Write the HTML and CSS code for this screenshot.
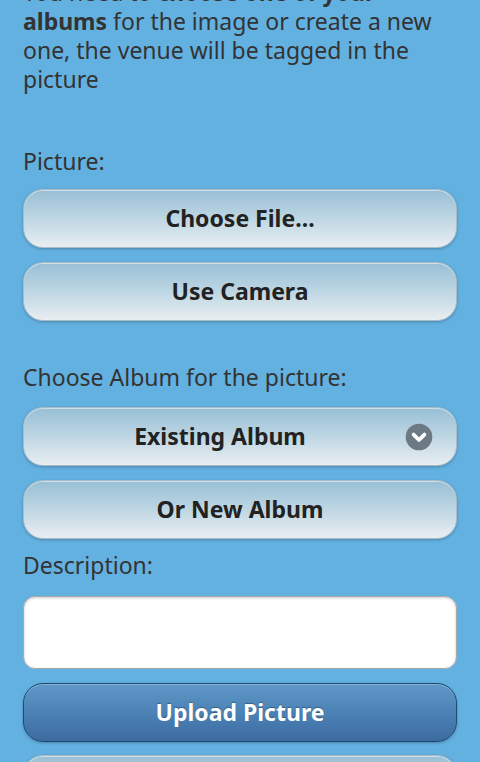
FILE: index.html
```html
<!DOCTYPE html>
<html>
<head>
<meta charset="utf-8">
<link rel="stylesheet" href="styles.css">
</head>
<body>
<div class="page">
  <p class="intro">You need to <b>choose one of your albums</b> for the image or create a new one, the venue will be tagged in the picture</p>

  <div class="label label-picture">Picture:</div>
  <div class="btn btn-first">Choose File...</div>
  <div class="btn">Use Camera</div>

  <div class="label label-album">Choose Album for the picture:</div>
  <div class="btn btn-select btn-after-album">
    <span class="btn-text">Existing Album</span>
    <svg class="select-icon" width="28" height="28" viewBox="0 0 28 28">
      <circle cx="14" cy="14" r="13.3" fill="#6d7a84"/>
      <path d="M8.6 11.6 L14 17 L19.4 11.6" fill="none" stroke="#fff" stroke-width="3.8" stroke-linecap="round" stroke-linejoin="round"/>
    </svg>
  </div>
  <div class="btn">Or New Album</div>

  <div class="label label-desc">Description:</div>
  <div class="textarea"></div>

  <div class="btn btn-primary">Upload Picture</div>
  <div class="btn btn-next"></div>
</div>
</body>
</html>
```

FILE: styles.css
```css
html, body {
  margin: 0;
  padding: 0;
  background: #63b1e1;
  height: 100%;
  overflow: hidden;
}

.page {
  margin-top: -22px;
  padding: 0 23px;
  font-family: "Noto Sans", "Open Sans", sans-serif;
  color: #333;
  font-size: 23px;
  line-height: 29px;
}

.intro {
  margin: 0;
}

.intro b {
  font-weight: 700;
}

.label {
  margin: 0;
}

.label-picture {
  margin-top: 53px;
}

.label-album {
  margin-top: 42px;
}

.label-desc {
  margin-top: 12px;
}

.btn {
  position: relative;
  box-sizing: border-box;
  height: 59px;
  line-height: 57px;
  margin-top: 14px;
  border: 1px solid #a9bcc7;
  border-radius: 20px;
  background: linear-gradient(to bottom, #98bfd5 0%, #bad4e2 45%, #e8eef1 100%);
  box-shadow: 0 1px 3px rgba(0, 0, 0, 0.25), inset 0 1px 0 rgba(255, 255, 255, 0.5);
  text-align: center;
  font-weight: 700;
  font-size: 23px;
  color: #222;
}

.btn-first {
  margin-top: 13px;
}

.btn-after-album {
  margin-top: 15px;
}

.btn-select .btn-text {
  display: block;
  padding-right: 40px;
}

.select-icon {
  position: absolute;
  right: 23px;
  top: 15px;
}

.textarea {
  box-sizing: border-box;
  height: 73px;
  margin-top: 16px;
  background: #fff;
  border: 1px solid #a9a9a9;
  border-radius: 12px;
  box-shadow: inset 0 1px 3px rgba(0, 0, 0, 0.2);
}

.btn-primary {
  margin-top: 14px;
  border: 1px solid #1b4a74;
  background: linear-gradient(to bottom, #5f98c8 0%, #4a80b4 55%, #3c6ba0 100%);
  color: #fff;
  text-shadow: 0 -1px 1px rgba(0, 0, 0, 0.3);
  box-shadow: 0 1px 3px rgba(0, 0, 0, 0.25), inset 0 1px 0 rgba(255, 255, 255, 0.25);
}

.btn-next {
  margin-top: 13px;
}
```
